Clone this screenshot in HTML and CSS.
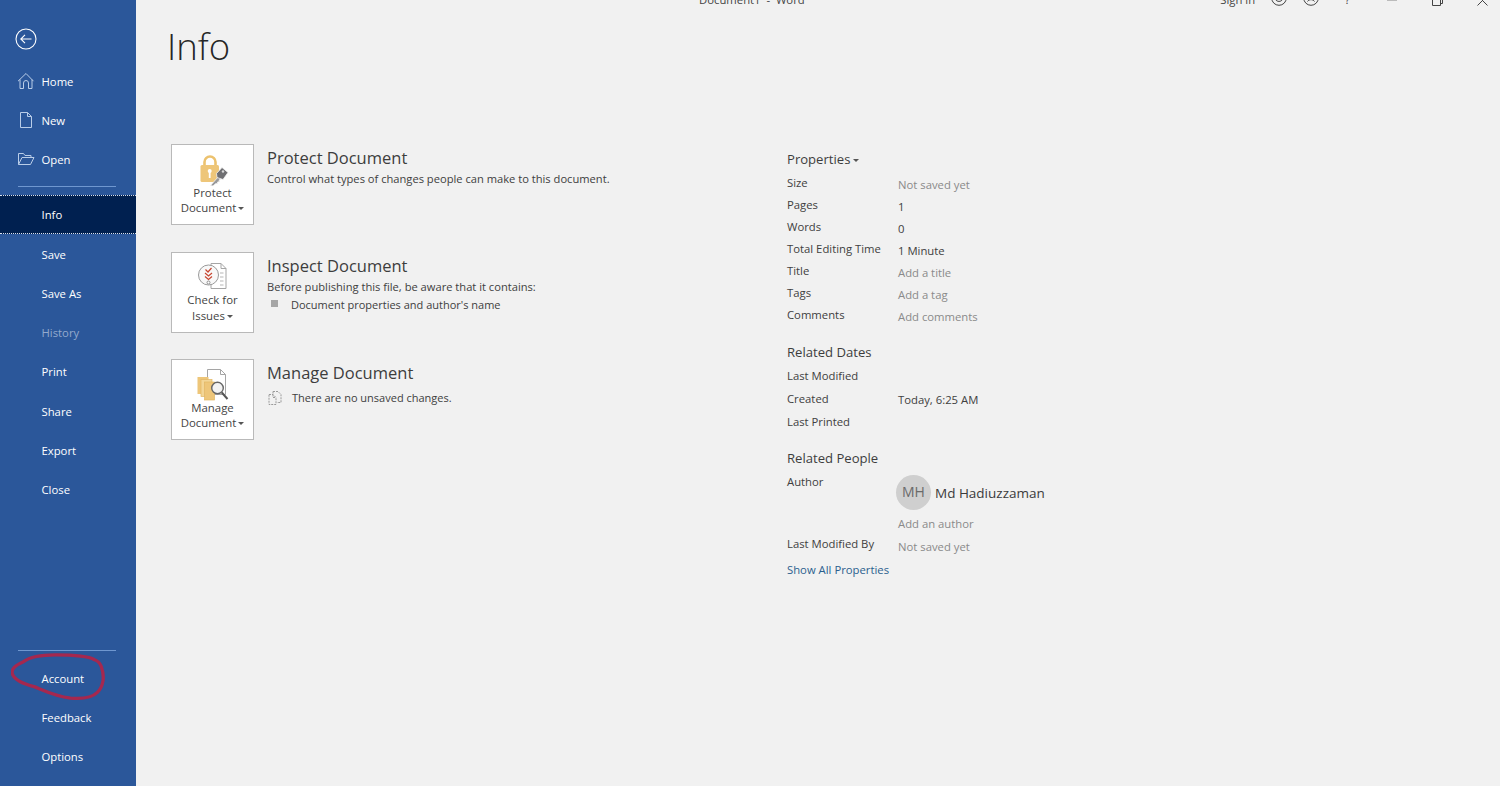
FILE: index.html
```html
<!DOCTYPE html>
<html lang="en">

<head>
    <meta charset="UTF-8">
    <meta name="viewport" content="width=device-width, initial-scale=1.0">
    <title>Info - Word</title>
    <link rel="stylesheet" href="styles.css">
</head>

<body>

    <nav class="sidebar">
        <div class="back-wrap">
            <svg class="back-icon" width="22" height="22" viewBox="0 0 22 22" fill="none" stroke="#fff" stroke-width="1.1">
                <circle cx="11" cy="11" r="10" />
                <path d="M16.5 11H5.8M10 6.8L5.8 11l4.2 4.2" />
            </svg>
        </div>
        <a class="nav-item" href="#">
            <svg class="nav-icon" width="18" height="18" viewBox="0 0 18 18" fill="none" stroke="#b9cde8" stroke-width="1">
                <path d="M1 9.2L9 1.5l7.500 7.700M3 7.500V16.500h3.500V11a2.500 2.500 0 0 1 5 0v5.500H15V7.500" />
            </svg>
            Home
        </a>
        <a class="nav-item" href="#">
            <svg class="nav-icon" width="18" height="18" viewBox="0 0 18 18" fill="none" stroke="#b9cde8" stroke-width="1">
                <path d="M3.500 1.500h7l4 4v11h-11zM10.500 1.500v4h4" />
            </svg>
            New
        </a>
        <a class="nav-item" href="#">
            <svg class="nav-icon" width="18" height="18" viewBox="0 0 18 18" fill="none" stroke="#b9cde8" stroke-width="1">
                <path d="M1.500 14.500v-11h5l1.500 2h6v2M1.500 14.500L5 7.500h12l-3.500 7z" />
            </svg>
            Open
        </a>
        <div class="nav-rule first-rule"></div>
        <a class="nav-item active" href="#">Info</a>
        <a class="nav-item" href="#">Save</a>
        <a class="nav-item" href="#">Save As</a>
        <a class="nav-item disabled" href="#">History</a>
        <a class="nav-item" href="#">Print</a>
        <a class="nav-item" href="#">Share</a>
        <a class="nav-item" href="#">Export</a>
        <a class="nav-item" href="#">Close</a>
        <div class="nav-bottom">
            <div class="nav-rule"></div>
            <a class="nav-item" href="#">Account</a>
            <a class="nav-item" href="#">Feedback</a>
            <a class="nav-item" href="#">Options</a>
        </div>
        <!-- red marker ring drawn over the Account item -->
        <svg class="marker" width="96" height="50" viewBox="0 0 100 52" fill="none" stroke="#a5284f" stroke-width="3.400" stroke-linecap="round">
            <path d="M87 7C80 3 62 2 46 2C30 2 20 4 13 9C6 12 1 15 1 20C2 28 12 32 24 35C34 39 46 45 62 47C74 48 84 47 90 41C96 35 98 25 94 14C92 9 90 8 87 7Z" />
        </svg>
    </nav>

    <main class="content">
        <header class="titlebar">
            <span class="doc-title">Document1 &nbsp;-&nbsp; Word</span>
            <div class="win-controls">
                <span class="sign-in">Sign in</span>
                <svg class="ctl smile" width="16" height="16" viewBox="0 0 16 16" fill="none" stroke="#444" stroke-width="1">
                    <circle cx="8" cy="8" r="7.300" />
                    <path d="M4.500 9.500c1.500 2.500 5.500 2.500 7 0" />
                </svg>
                <svg class="ctl frown" width="16" height="16" viewBox="0 0 16 16" fill="none" stroke="#444" stroke-width="1">
                    <circle cx="8" cy="8" r="7.300" />
                    <path d="M4.500 11.500c1.500-2.500 5.500-2.500 7 0" />
                </svg>
                <span class="help">?</span>
                <span class="min-btn"></span>
                <svg class="ctl restore" width="11" height="11" viewBox="0 0 11 11" fill="none" stroke="#444" stroke-width="1">
                    <path d="M.5 2.500h8v8h-8zM2.500 2.500v-2h8v8h-2" />
                </svg>
                <svg class="ctl close" width="11" height="11" viewBox="0 0 11 11" fill="none" stroke="#444" stroke-width="1">
                    <path d="M.5.5l10 10M10.500.5l-10 10" />
                </svg>
            </div>
        </header>

        <h1 class="page-title">Info</h1>

        <div class="columns">
            <div class="actions">
                <section class="action">
                    <button class="action-btn">
                        <svg width="32" height="32" viewBox="0 0 32 32">
                            <path d="M7.500 12V8a5.500 5.500 0 0 1 11 0v4" fill="none" stroke="#ecc26f" stroke-width="2.600" />
                            <rect x="3.500" y="11" width="18.500" height="17" rx="1.500" fill="#eec679" />
                            <circle cx="12.700" cy="17" r="2" fill="#fff" />
                            <rect x="11.800" y="18" width="1.800" height="6" fill="#fff" />
                            <path d="M13.500 31.500l8-9 2.500 2.500-2 1 .5 1.500-2 .5v1.500l-2 .2-2.500 2.300z" fill="#98989a" stroke="#f4f4f4" stroke-width=".8" />
                            <path d="M19.500 19.500l5.500-6 6 5-5 7-6-2z" fill="#6f6f72" stroke="#f4f4f4" stroke-width=".8" />
                            <circle cx="26" cy="17.500" r="1.200" fill="#d8d8d8" />
                        </svg>
                        <span>Protect<br>Document <i class="caret"></i></span>
                    </button>
                    <div class="action-text">
                        <h2>Protect Document</h2>
                        <p>Control what types of changes people can make to this document.</p>
                    </div>
                </section>

                <section class="action">
                    <button class="action-btn">
                        <svg width="32" height="32" viewBox="0 0 32 32" fill="none">
                            <path d="M14 1.500h10l5 5v20H14z" fill="#fff" stroke="#a5a5a5" />
                            <path d="M24 1.500v5h5" stroke="#a5a5a5" />
                            <path d="M23 11h3.500M23 15h3.500M23 19h3.500M23 23h3.500" stroke="#b5b5b5" />
                            <circle cx="11.500" cy="13" r="10" fill="#f8f8f8" stroke="#9a9a9a" />
                            <path d="M8.500 7.500l2.500 2.500 3.500-4M8 11l3.500 3 3.500-3M8 14.500l3.500 3 3.500-3" stroke="#c8452f" stroke-width="1.200" />
                            <circle cx="11.500" cy="20.500" r="1.500" fill="#fff" stroke="#8e8e8e" />
                        </svg>
                        <span>Check for<br>Issues <i class="caret"></i></span>
                    </button>
                    <div class="action-text">
                        <h2>Inspect Document</h2>
                        <p>Before publishing this file, be aware that it contains:</p>
                        <ul class="issue-list">
                            <li>Document properties and author's name</li>
                        </ul>
                    </div>
                </section>

                <section class="action">
                    <button class="action-btn">
                        <svg width="34" height="32" viewBox="0 0 34 32" fill="none">
                            <path d="M11.500 .5h13l5 5v20h-18z" fill="#fff" stroke="#a5a5a5" />
                            <path d="M24.500 .5v5h5" stroke="#a5a5a5" />
                            <rect x="1.500" y="8" width="11" height="17" fill="#eec679" />
                            <rect x="5" y="10.500" width="11" height="17" fill="#f3d697" stroke="#e2b765" stroke-width=".7" />
                            <rect x="8.500" y="13" width="10" height="18" fill="#eec679" stroke="#e2b765" stroke-width=".7" />
                            <circle cx="21.500" cy="19" r="5.800" fill="#f3f3f3" stroke="#666" stroke-width="1.400" />
                            <path d="M25.800 23.500l5.700 6.500" stroke="#555" stroke-width="2" />
                        </svg>
                        <span>Manage<br>Document <i class="caret"></i></span>
                    </button>
                    <div class="action-text">
                        <h2>Manage Document</h2>
                        <p class="unsaved">
                            <svg width="14" height="14" viewBox="0 0 14 14" fill="none" stroke="#9a9a9a" stroke-width="1">
                                <path d="M5 .5h5l3 3v8H9M5 .5v3M1 3.500h4l3 3v7H1zM5 3.500v3h3" stroke-dasharray="2 1" />
                            </svg>
                            There are no unsaved changes.
                        </p>
                    </div>
                </section>
            </div>

            <aside class="props">
                <h3 class="props-head first">Properties <i class="caret"></i></h3>
                <div class="prop"><span>Size</span><span class="muted">Not saved yet</span></div>
                <div class="prop"><span>Pages</span><span>1</span></div>
                <div class="prop"><span>Words</span><span>0</span></div>
                <div class="prop"><span>Total Editing Time</span><span>1 Minute</span></div>
                <div class="prop"><span>Title</span><span class="muted">Add a title</span></div>
                <div class="prop"><span>Tags</span><span class="muted">Add a tag</span></div>
                <div class="prop"><span>Comments</span><span class="muted">Add comments</span></div>

                <h3 class="props-head dates">Related Dates</h3>
                <div class="prop date"><span>Last Modified</span><span></span></div>
                <div class="prop date"><span>Created</span><span>Today, 6:25 AM</span></div>
                <div class="prop date"><span>Last Printed</span><span></span></div>

                <h3 class="props-head people">Related People</h3>
                <div class="prop author">
                    <span>Author</span>
                    <div class="person">
                        <span class="avatar">MH</span>
                        <span class="person-name">Md Hadiuzzaman</span>
                    </div>
                </div>
                <div class="prop add-author"><span></span><span class="muted">Add an author</span></div>
                <div class="prop modified-by"><span>Last Modified By</span><span class="muted">Not saved yet</span></div>
                <a class="show-all" href="#">Show All Properties</a>
            </aside>
        </div>
    </main>

</body>

</html>
```

FILE: styles.css
```css
* {
    box-sizing: border-box;
}

html,
body {
    height: 786px;
}

body {
    margin: 0;
    display: flex;
    overflow: hidden;
    font-family: 'Open Sans', 'Noto Sans', sans-serif;
    font-size: 11.3px;
    color: #404040;
    background-color: #f1f1f1;
}

/* left backstage menu */
.sidebar {
    position: relative;
    width: 136px;
    flex-shrink: 0;
    display: flex;
    flex-direction: column;
    background-color: #2b579a;
}

.back-wrap {
    height: 61.500px;
    padding: 28px 0 0 15px;
}

.back-icon {
    display: block;
}

.nav-item {
    position: relative;
    display: flex;
    align-items: center;
    height: 39.300px;
    padding-left: 41.500px;
    color: #fff;
    font-size: 11.300px;
    text-decoration: none;
}

.nav-icon {
    position: absolute;
    left: 17px;
    top: 10px;
}

.nav-item.active {
    height: 39px;
    background-color: #002050;
    border-top: 1px dotted #d8e0ec;
    border-bottom: 1px dotted #d8e0ec;
}

.nav-item.disabled {
    color: #93aacd;
}

.nav-rule {
    height: 1px;
    margin: 0 20px 0 18px;
    background-color: #6f97d0;
}

.first-rule {
    margin-top: 7px;
    margin-bottom: 8px;
}

.nav-bottom {
    margin-top: auto;
    padding-bottom: 10px;
}

.nav-bottom .nav-item {
    height: 39px;
}

.nav-bottom .nav-rule {
    margin-bottom: 8px;
}

.marker {
    position: absolute;
    left: 11px;
    top: 653px;
}

/* right side */
.content {
    flex: 1;
    min-width: 0;
}

.titlebar {
    display: flex;
    align-items: flex-end;
    height: 7px;
    overflow: hidden;
    font-size: 11.300px;
    line-height: 14px;
    color: #444;
}

.doc-title {
    margin-left: 563px;
    white-space: nowrap;
}

.win-controls {
    display: flex;
    align-items: flex-end;
    margin-left: auto;
    padding-right: 12px;
}

.sign-in {
    margin-right: 16px;
}

.ctl {
    flex-shrink: 0;
    margin-bottom: 1px;
}

.smile {
    margin-right: 16px;
}

.frown {
    margin-right: 26px;
}

.help {
    margin-right: 37px;
}

.min-btn {
    width: 10px;
    height: 1px;
    margin-right: 35px;
    margin-bottom: 6px;
    background-color: #bbb;
}

.restore {
    margin-right: 34px;
}

.page-title {
    margin: 14px 0 0 31px;
    font-size: 36.500px;
    line-height: 50px;
    font-weight: 300;
    color: #262626;
}

.columns {
    display: flex;
    margin-top: 73px;
    padding-left: 35px;
}

.actions {
    width: 616px;
    flex-shrink: 0;
}

.action {
    display: flex;
    height: 107.500px;
}

.action-btn {
    display: flex;
    flex-direction: column;
    align-items: center;
    width: 83px;
    height: 81px;
    flex-shrink: 0;
    padding: 9px 0 0;
    border: 1px solid #b9b9b9;
    background-color: #fff;
    font-family: inherit;
    font-size: 11.400px;
    line-height: 15.500px;
    color: #444;
}

.action-btn svg {
    flex-shrink: 0;
    height: 32px;
    margin-bottom: -1.500px;
}

.caret {
    display: inline-block;
    margin-left: -1px;
    vertical-align: 2px;
    border-left: 3px solid transparent;
    border-right: 3px solid transparent;
    border-top: 3px solid #555;
}

.action-text {
    padding-left: 13px;
}

.action-text h2 {
    margin: 3px 0 0;
    font-size: 16.500px;
    line-height: 22px;
    font-weight: 400;
    color: #3d3d3d;
}

.action-text p {
    margin: 2px 0 0;
    font-size: 11.150px;
    line-height: 16px;
}

.issue-list {
    margin: 2px 0 0;
    padding: 0;
    list-style: none;
}

.issue-list li {
    position: relative;
    padding-left: 24px;
    font-size: 11px;
    line-height: 16px;
}

.issue-list li::before {
    content: "";
    position: absolute;
    left: 4px;
    top: 3px;
    width: 7px;
    height: 7px;
    background-color: #a6a6a6;
}

.action-text .unsaved {
    display: flex;
    align-items: center;
    gap: 10px;
    margin-top: 6px;
    padding-left: 1px;
    font-size: 11px;
}

/* properties list */
.props-head {
    margin: 0;
    font-size: 13.100px;
    line-height: 20px;
    font-weight: 400;
    color: #3d3d3d;
}

.props-head.first {
    margin-top: 5px;
    margin-bottom: 6px;
}

.props-head.dates {
    margin-top: 13px;
    margin-bottom: 6px;
}

.props-head.people {
    margin-top: 11px;
    margin-bottom: 6px;
}

.prop {
    display: grid;
    grid-template-columns: 111px 1fr;
    height: 22px;
    font-size: 11.300px;
    line-height: 16px;
}

.prop.date {
    height: 23px;
}

.prop > span:last-child {
    padding-top: 2px;
}

.prop.date > span:last-child {
    padding-top: 1px;
}

.prop.modified-by > span:last-child {
    padding-top: 3px;
}

.muted {
    color: #8a8a8a;
}

.prop.author {
    height: 40px;
}

.person {
    display: flex;
    align-items: center;
    gap: 4px;
    height: 36px;
    margin-left: -2px;
}

.avatar {
    display: flex;
    align-items: center;
    justify-content: center;
    width: 35px;
    height: 35px;
    flex-shrink: 0;
    border-radius: 50%;
    background-color: #cfcfcf;
    font-size: 14px;
    color: #6a6a6a;
}

.person-name {
    padding-top: 2px;
    font-size: 13.500px;
    color: #3b3b3b;
}

.add-author {
    height: 22px;
}

.show-all {
    display: block;
    margin-top: 4px;
    font-size: 11.300px;
    line-height: 16px;
    color: #2b5f8e;
    text-decoration: none;
}
```
